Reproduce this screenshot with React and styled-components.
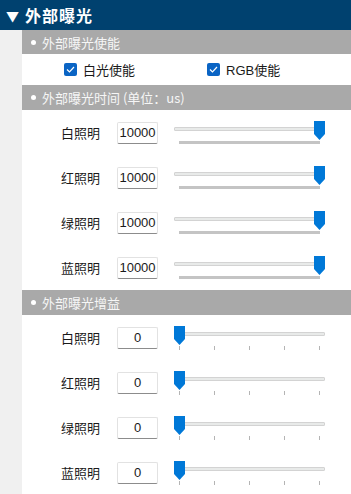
import React from 'react';
import styled, { createGlobalStyle } from 'styled-components';

const GlobalStyle = createGlobalStyle`
  html, body {
    margin: 0;
    padding: 0;
    background: #ffffff;
  }
  body {
    font-family: "Noto Sans", "Noto Sans CJK SC", sans-serif;
    overflow: hidden;
  }
`;

const Page = styled.div`
  width: 351px;
  height: 494px;
  display: flex;
  flex-direction: column;
  overflow: hidden;
`;

const TitleBar = styled.div`
  height: 30px;
  flex-shrink: 0;
  background: #00416f;
  color: #ffffff;
  display: flex;
  align-items: center;
  padding-left: 6px;
  gap: 5px;
  font-family: "Noto Sans CJK SC", sans-serif;
  font-weight: 700;
  font-size: 16px;
  letter-spacing: 1px;
`;

const Arrow = styled.span`
  font-size: 13px;
  line-height: 1;
`;

const Body = styled.div`
  flex: 1;
  display: flex;
`;

const Gutter = styled.div`
  width: 22px;
  flex-shrink: 0;
  background: #f0f0f0;
`;

const Content = styled.div`
  flex: 1;
  display: flex;
  flex-direction: column;
`;

const SectionHeader = styled.div`
  height: ${(p) => p.h || 25}px;
  flex-shrink: 0;
  background: #a9a9a9;
  color: #f6f6f6;
  display: flex;
  align-items: center;
  padding-left: 9px;
  gap: 6px;
  font-family: "Noto Sans CJK SC", sans-serif;
  font-size: 13px;
`;

const Dot = styled.span`
  width: 5px;
  height: 5px;
  border-radius: 50%;
  background: #ffffff;
`;

const CheckRow = styled.div`
  height: 31px;
  display: flex;
  align-items: center;
  padding-left: 42px;
`;

const CheckItem = styled.label`
  display: flex;
  align-items: center;
  gap: 6px;
  width: 143px;
  font-size: 13px;
  color: #1a1a1a;
  font-family: "Liberation Sans", "Noto Sans CJK SC", sans-serif;
`;

const Box = styled.span`
  width: 13px;
  height: 13px;
  border-radius: 2px;
  background: #0a64c4;
  display: flex;
  align-items: center;
  justify-content: center;
`;

const Row = styled.div`
  height: 45px;
  display: flex;
  align-items: center;
`;

const Label = styled.div`
  width: 78px;
  text-align: right;
  font-family: "Noto Sans CJK SC", sans-serif;
  font-size: 13px;
  color: #1a1a1a;
`;

const NumBox = styled.div`
  margin-left: 17px;
  width: 39px;
  height: 20px;
  border: 1px solid #e2e2e2;
  border-bottom-color: #8c8c8c;
  border-radius: 2px;
  display: flex;
  align-items: center;
  justify-content: center;
  font-family: "Liberation Sans", sans-serif;
  font-size: 13px;
  color: #1a1a1a;
`;

const Slider = styled.div`
  position: relative;
  margin-left: 16px;
  width: 151px;
  height: ${(p) => (p.dense ? 23 : 24)}px;
`;

const Track = styled.div`
  margin-top: 6px;
  height: 2px;
  border: 1px solid #d3d3d3;
  background: #e8eae9;
  border-radius: 1px;
`;

const Ticks = styled.div`
  margin: 10px 5px 0 5px;
  height: ${(p) => (p.dense ? 3 : 4)}px;
  display: flex;
  justify-content: space-between;
  background: ${(p) => (p.dense ? '#c4c4c4' : 'transparent')};
`;

const Tick = styled.span`
  width: 1px;
  height: 4px;
  background: #b4b4b4;
`;

const Thumb = styled.svg`
  position: absolute;
  top: 0;
  width: 11px;
  height: 19px;
`;

const ThumbShape = () => (
  <path d="M0 0 H11 V13 L5.5 19 L0 13 Z" fill="#0078d7" />
);

function CheckBox({ label }) {
  return (
    <CheckItem>
      <Box>
        <svg width="9" height="7" viewBox="0 0 9 7">
          <path d="M1 3.5 L3.5 6 L8 1" stroke="#fff" strokeWidth="1.2" fill="none" />
        </svg>
      </Box>
      {label}
    </CheckItem>
  );
}

function SliderRow({ label, value, max, dense }) {
  const pos = (value / max) * 140;
  return (
    <Row>
      <Label>{label}</Label>
      <NumBox>{value}</NumBox>
      <Slider dense={dense}>
        <Track />
        <Ticks dense={dense}>
          {dense ? null : [0, 1, 2, 3, 4].map((i) => <Tick key={i} />)}
        </Ticks>
        <Thumb viewBox="0 0 11 19" style={{ left: pos }}>
          <ThumbShape />
        </Thumb>
      </Slider>
    </Row>
  );
}

const lights = ['白照明', '红照明', '绿照明', '蓝照明'];

export default function App() {
  return (
    <Page>
      <GlobalStyle />
      <TitleBar>
        <Arrow>▼</Arrow>
        外部曝光
      </TitleBar>
      <Body>
        <Gutter />
        <Content>
          <SectionHeader h={24}>
            <Dot />
            外部曝光使能
          </SectionHeader>
          <CheckRow>
            <CheckBox label="白光使能" />
            <CheckBox label="RGB使能" />
          </CheckRow>
          <SectionHeader>
            <Dot />
            外部曝光时间 (单位：us)
          </SectionHeader>
          {lights.map((l) => (
            <SliderRow key={l} label={l} value={10000} max={10000} dense />
          ))}
          <SectionHeader>
            <Dot />
            外部曝光增益
          </SectionHeader>
          {lights.map((l) => (
            <SliderRow key={l} label={l} value={0} max={100} />
          ))}
        </Content>
      </Body>
    </Page>
  );
}
